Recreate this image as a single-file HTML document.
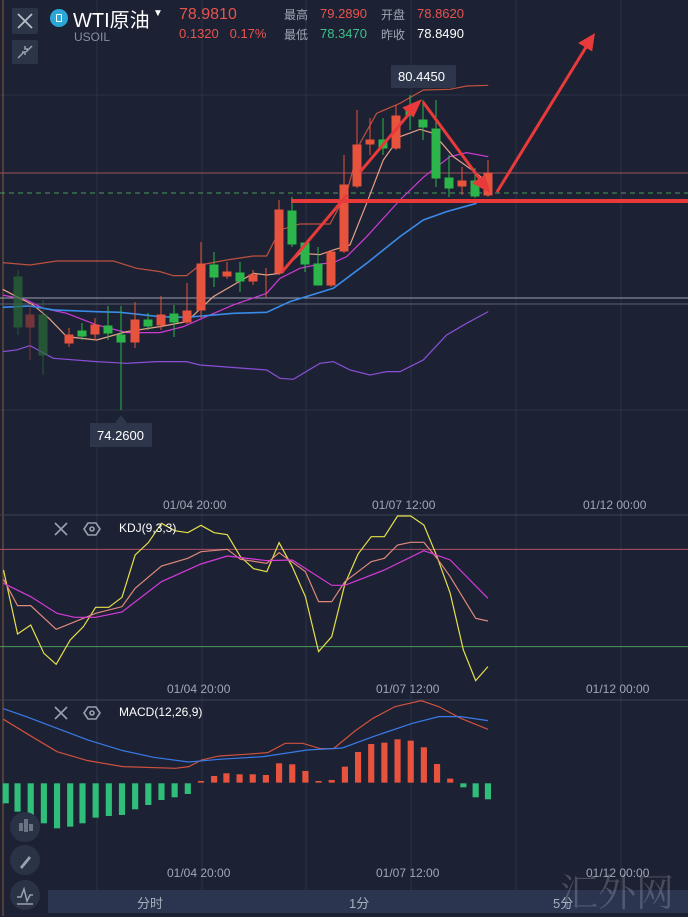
<!DOCTYPE html>
<html><head><meta charset="utf-8"><style>
body{margin:0;width:688px;height:916px;background:#1c2233;overflow:hidden;font-family:"Liberation Sans","Noto Sans CJK SC",sans-serif;position:relative}
.t{position:absolute;white-space:nowrap}
.btn{position:absolute;left:12px;width:26px;height:26px;background:#2c3447;border-radius:2px}
.rb{position:absolute;left:10px;width:30px;height:30px;border-radius:50%;background:#2a3245}
</style></head><body>
<svg width="688" height="916" style="position:absolute;left:0;top:0">
<g stroke="#2a3246" stroke-width="1">
<line x1="97" y1="0" x2="97" y2="890"/><line x1="202" y1="0" x2="202" y2="890"/><line x1="306" y1="0" x2="306" y2="890"/><line x1="411" y1="0" x2="411" y2="890"/><line x1="516" y1="0" x2="516" y2="890"/><line x1="621" y1="0" x2="621" y2="890"/>
<line x1="0" y1="95" x2="688" y2="95"/><line x1="0" y1="410" x2="688" y2="410"/>
</g>
<line x1="3" y1="0" x2="3" y2="916" stroke="#8a5a3a" stroke-width="1"/>
<line x1="0" y1="515" x2="688" y2="515" stroke="#3a4256"/>
<line x1="0" y1="700" x2="688" y2="700" stroke="#3a4256"/>
<line x1="0" y1="173" x2="688" y2="173" stroke="#a0505a" stroke-width="1"/>
<line x1="0" y1="193" x2="688" y2="193" stroke="#4a9a5a" stroke-dasharray="5,4"/>
<line x1="0" y1="298" x2="688" y2="298" stroke="#9aa0b0" stroke-width="1"/>
<line x1="0" y1="304" x2="688" y2="304" stroke="#5a6070" stroke-width="1"/>
<g transform="translate(0,60) scale(0.3333)" fill="none" stroke-width="1.2" vector-effect="non-scaling-stroke">
<polyline vector-effect="non-scaling-stroke" stroke="#c0503e" points="8,608 90,615 170,603 340,603 410,625 480,635 520,647 560,647 600,615 680,600 760,588 800,588 840,510 900,492 990,492 1040,400 1080,250 1130,160 1200,130 1270,90 1350,88 1400,78 1465,76"/>
<polyline vector-effect="non-scaling-stroke" stroke="#8a4fd8" points="8,875 50,870 90,857 160,895 290,905 380,910 470,905 560,905 600,915 800,930 840,955 880,958 960,910 1000,905 1050,930 1110,945 1160,935 1200,935 1270,900 1340,825 1400,790 1465,755"/>
<polyline vector-effect="non-scaling-stroke" stroke="#d03ad8" points="8,705 80,720 130,745 200,760 290,795 380,818 480,818 550,800 600,778 700,735 800,700 840,655 900,625 960,612 1000,608 1040,590 1100,530 1200,420 1270,352 1350,290 1400,278 1465,290"/>
<polyline vector-effect="non-scaling-stroke" stroke="#e8a088" points="8,688 60,715 100,735 150,778 200,830 290,840 380,815 480,800 560,785 640,710 760,640 800,645 840,640 900,580 960,584 1000,570 1050,555 1100,430 1150,300 1200,230 1260,208 1300,220 1360,290 1430,340 1465,370"/>
<polyline vector-effect="non-scaling-stroke" stroke="#3a8ae8" stroke-width="1.6" points="8,742 90,738 160,750 290,755 360,757 480,770 560,772 700,760 800,757 870,725 1000,685 1100,610 1200,530 1270,480 1340,455 1430,430"/>
</g>
<g stroke-width="1">
<!-- candles: x, top, bottom, color -->
<g fill="#2b6a3a" stroke="#2b6a3a" opacity="0.7"><line x1="18" y1="270" x2="18" y2="335"/><rect x="14" y="277" width="8" height="50"/><line x1="43" y1="300" x2="43" y2="375"/><rect x="39" y="315" width="8" height="40"/></g>
<g fill="#8a3a3a" stroke="#8a3a3a" opacity="0.8"><line x1="30" y1="305" x2="30" y2="360"/><rect x="26" y="315" width="8" height="12"/></g>
<g fill="#e8533e" stroke="#e8533e">
<line x1="69" y1="328" x2="69" y2="347"/><rect x="65" y="335" width="8" height="8"/>
<line x1="95" y1="318" x2="95" y2="340"/><rect x="91" y="325" width="8" height="9"/>
<line x1="135" y1="302" x2="135" y2="348"/><rect x="131" y="320" width="8" height="22"/>
<line x1="161" y1="296" x2="161" y2="330"/><rect x="157" y="315" width="8" height="10"/>
<line x1="187" y1="283" x2="187" y2="324"/><rect x="183" y="311" width="8" height="11"/>
<line x1="201" y1="242" x2="201" y2="318"/><rect x="197" y="264" width="8" height="46"/>
<line x1="227" y1="262" x2="227" y2="279"/><rect x="223" y="272" width="8" height="4"/>
<line x1="253" y1="270" x2="253" y2="285"/><rect x="249" y="275" width="8" height="6"/>
<line x1="266" y1="268" x2="266" y2="298"/>
<line x1="279" y1="200" x2="279" y2="275"/><rect x="275" y="210" width="8" height="63"/>
<line x1="331" y1="250" x2="331" y2="287"/><rect x="327" y="252" width="8" height="33"/>
<line x1="344" y1="155" x2="344" y2="253"/><rect x="340" y="185" width="8" height="66"/>
<line x1="357" y1="110" x2="357" y2="188"/><rect x="353" y="145" width="8" height="41"/>
<line x1="370" y1="118" x2="370" y2="155"/><rect x="366" y="140" width="8" height="4"/>
<line x1="396" y1="105" x2="396" y2="150"/><rect x="392" y="116" width="8" height="32"/>
<line x1="462" y1="167" x2="462" y2="195"/><rect x="458" y="181" width="8" height="5"/>
<line x1="488" y1="160" x2="488" y2="197"/><rect x="484" y="173" width="8" height="22"/>
</g>
<g fill="#2bb54a" stroke="#2bb54a">
<line x1="82" y1="323" x2="82" y2="340"/><rect x="78" y="331" width="8" height="5"/>
<line x1="108" y1="306" x2="108" y2="340"/><rect x="104" y="326" width="8" height="7"/>
<line x1="121" y1="306" x2="121" y2="410"/><rect x="117" y="335" width="8" height="7"/>
<line x1="148" y1="313" x2="148" y2="330"/><rect x="144" y="320" width="8" height="6"/>
<line x1="174" y1="305" x2="174" y2="337"/><rect x="170" y="314" width="8" height="8"/>
<line x1="214" y1="252" x2="214" y2="287"/><rect x="210" y="265" width="8" height="12"/>
<line x1="240" y1="262" x2="240" y2="292"/><rect x="236" y="273" width="8" height="8"/>
<line x1="292" y1="197" x2="292" y2="247"/><rect x="288" y="211" width="8" height="33"/>
<line x1="305" y1="243" x2="305" y2="272"/><rect x="301" y="243" width="8" height="21"/>
<line x1="318" y1="247" x2="318" y2="285"/><rect x="314" y="264" width="8" height="21"/>
<line x1="383" y1="118" x2="383" y2="155"/><rect x="379" y="140" width="8" height="8"/>
<line x1="410" y1="95" x2="410" y2="130"/><rect x="406" y="107" width="8" height="8"/>
<line x1="423" y1="100" x2="423" y2="140"/><rect x="419" y="120" width="8" height="7"/>
<line x1="436" y1="100" x2="436" y2="187"/><rect x="432" y="129" width="8" height="49"/>
<line x1="449" y1="155" x2="449" y2="197"/><rect x="445" y="178" width="8" height="10"/>
<line x1="475" y1="168" x2="475" y2="198"/><rect x="471" y="181" width="8" height="15"/>
</g>
</g>
<line x1="291" y1="201" x2="688" y2="201" stroke="#e83a3a" stroke-width="4"/>
<g stroke="#e83a3a" stroke-width="3" fill="#e83a3a">
<line x1="282" y1="272" x2="347" y2="195"/>
<line x1="360" y1="172" x2="414" y2="108"/><polygon points="419,102 405,108 413,115"/>
<line x1="423" y1="102" x2="482" y2="182"/><polygon points="488,190 475,183 484,177"/>
<line x1="497" y1="192" x2="588" y2="44"/><polygon points="593,36 581,43 591,49"/>
</g>
<rect x="391" y="65" width="65" height="23" fill="#2d364b"/>
<rect x="90" y="423" width="62" height="24" fill="#2d364b"/><polygon points="121,415 115,423 127,423" fill="#2d364b"/>
<g transform="translate(0,510) scale(0.4388,0.3333)" fill="none">
<line x1="0" y1="118" x2="1568" y2="118" stroke="#b0506a" vector-effect="non-scaling-stroke"/>
<line x1="0" y1="410" x2="1568" y2="410" stroke="#4a9a5a" vector-effect="non-scaling-stroke"/>
<polyline vector-effect="non-scaling-stroke" stroke="#e6e04a" stroke-width="1.2" points="8,180 40,372 70,345 100,430 128,463 160,390 190,350 218,292 248,292 278,262 308,135 338,98 368,40 398,62 428,68 458,46 488,68 518,74 548,140 578,176 608,185 636,98 666,170 696,260 726,425 756,380 786,222 816,132 846,80 876,80 906,18 936,18 966,45 996,140 1026,250 1056,420 1084,512 1112,470"/>
<polyline vector-effect="non-scaling-stroke" stroke="#e0887a" stroke-width="1.2" points="8,208 40,287 70,287 128,358 218,310 278,290 308,235 368,168 428,145 458,125 518,118 548,148 608,160 636,128 696,185 726,275 756,275 786,215 846,155 876,145 906,105 936,97 966,97 996,145 1026,200 1084,325 1112,333"/>
<polyline vector-effect="non-scaling-stroke" stroke="#d63ad8" stroke-width="1.2" points="8,220 70,260 130,310 170,322 218,322 278,306 368,215 458,162 518,138 608,152 666,150 756,226 786,226 876,180 966,122 1026,150 1112,265"/>
<polyline vector-effect="non-scaling-stroke" stroke="#d0503e" stroke-width="1.2" points="8,628 60,670 130,725 200,752 280,770 400,775 430,770 460,750 500,738 560,733 610,728 650,700 690,700 730,716 760,716 810,662 850,625 900,590 960,572 1000,590 1050,625 1112,658"/>
<polyline vector-effect="non-scaling-stroke" stroke="#3a7ae8" stroke-width="1.2" points="8,596 60,620 130,655 200,690 280,722 350,742 430,756 500,748 600,740 700,720 780,714 850,680 940,640 1000,620 1050,620 1112,632"/>
<g fill="#2fbf7a">
<rect x="6" y="820" width="14" height="60"/><rect x="33" y="820" width="14" height="85"/><rect x="63" y="820" width="14" height="95"/><rect x="93" y="820" width="14" height="120"/><rect x="123" y="820" width="14" height="135"/><rect x="153" y="820" width="14" height="130"/><rect x="181" y="820" width="14" height="120"/><rect x="211" y="820" width="14" height="103"/><rect x="241" y="820" width="14" height="98"/><rect x="271" y="820" width="14" height="95"/><rect x="301" y="820" width="14" height="78"/><rect x="331" y="820" width="14" height="65"/><rect x="361" y="820" width="14" height="50"/><rect x="391" y="820" width="14" height="42"/><rect x="421" y="820" width="14" height="32"/>
<rect x="1049" y="820" width="14" height="12"/><rect x="1077" y="820" width="14" height="42"/><rect x="1105" y="820" width="14" height="48"/>
</g>
<g fill="#e8533e">
<rect x="451" y="813" width="14" height="5"/><rect x="481" y="798" width="14" height="20"/><rect x="509" y="790" width="14" height="28"/><rect x="539" y="793" width="14" height="25"/><rect x="569" y="793" width="14" height="25"/><rect x="599" y="795" width="14" height="23"/><rect x="629" y="760" width="14" height="58"/><rect x="659" y="763" width="14" height="55"/><rect x="689" y="783" width="14" height="35"/><rect x="719" y="813" width="14" height="5"/><rect x="749" y="810" width="14" height="8"/><rect x="779" y="770" width="14" height="48"/><rect x="809" y="726" width="14" height="92"/><rect x="839" y="702" width="14" height="116"/><rect x="869" y="698" width="14" height="120"/><rect x="899" y="688" width="14" height="130"/><rect x="929" y="692" width="14" height="126"/><rect x="959" y="712" width="14" height="106"/><rect x="989" y="762" width="14" height="56"/><rect x="1019" y="806" width="14" height="12"/>
</g>
</g>
<g stroke="#9aa0ae" stroke-width="1.6" fill="none">
<path d="M55 523 L67 535 M67 523 L55 535"/><path d="M55 707 L67 719 M67 707 L55 719"/>
<polygon points="88,523 96,523 100,529 96,535 88,535 84,529"/><circle cx="92" cy="529" r="2"/>
<polygon points="88,707 96,707 100,713 96,719 88,719 84,713"/><circle cx="92" cy="713" r="2"/>
</g>
</svg>
<div class="btn" style="top:8px"></div>
<svg width="688" height="80" style="position:absolute;left:0;top:0">
<path d="M18 14 L32 28 M32 14 L18 28" stroke="#b8bdc8" stroke-width="1.8"/>
</svg>
<div class="btn" style="top:40px;height:24px"></div>
<svg width="60" height="80" style="position:absolute;left:0;top:0"><path d="M18 58 L24 52 M32 46 L26 52 M22 52 L25 52 L25 55 M28 49 L25 49 L25 46" stroke="#9aa0ae" stroke-width="1.5" fill="none"/></svg>
<div class="t" style="left:50px;top:9px;width:18px;height:18px;border-radius:50%;background:#2aa7d8"></div>
<div class="t" style="left:56px;top:14px;width:6px;height:8px;border:1.5px solid #fff;border-radius:1px;box-sizing:border-box"></div>
<div class="t" style="left:73px;top:4px;font-size:20px;color:#fff">WTI原油</div>
<div class="t" style="left:153px;top:8px;font-size:10px;color:#fff">▼</div>
<div class="t" style="left:74px;top:30px;font-size:12px;color:#8a90a0">USOIL</div>
<div class="t" style="left:179px;top:6px;font-size:16px;color:#e8534e">78.9810</div>
<div class="t" style="left:179px;top:26px;font-size:13px;color:#e8534e">0.1320&nbsp;&nbsp;&nbsp;0.17%</div>
<div class="t" style="left:284px;top:6px;font-size:12px;color:#a0a6b4">最高</div>
<div class="t" style="left:320px;top:6px;font-size:13px;color:#e8534e">79.2890</div>
<div class="t" style="left:381px;top:6px;font-size:12px;color:#a0a6b4">开盘</div>
<div class="t" style="left:417px;top:6px;font-size:13px;color:#e8534e">78.8620</div>
<div class="t" style="left:284px;top:26px;font-size:12px;color:#a0a6b4">最低</div>
<div class="t" style="left:320px;top:26px;font-size:13px;color:#3cc08a">78.3470</div>
<div class="t" style="left:381px;top:26px;font-size:12px;color:#a0a6b4">昨收</div>
<div class="t" style="left:417px;top:26px;font-size:13px;color:#fff">78.8490</div>
<div class="t" style="left:398px;top:69px;font-size:13px;color:#fff">80.4450</div>
<div class="t" style="left:97px;top:428px;font-size:13px;color:#fff">74.2600</div>
<div class="t" style="left:163px;top:498px;font-size:12px;color:#a0a6b4">01/04 20:00</div>
<div class="t" style="left:372px;top:498px;font-size:12px;color:#a0a6b4">01/07 12:00</div>
<div class="t" style="left:583px;top:498px;font-size:12px;color:#a0a6b4">01/12 00:00</div>
<div class="t" style="left:119px;top:521px;font-size:12px;color:#fff">KDJ(9,3,3)</div>
<div class="t" style="left:167px;top:682px;font-size:12px;color:#a0a6b4">01/04 20:00</div>
<div class="t" style="left:376px;top:682px;font-size:12px;color:#a0a6b4">01/07 12:00</div>
<div class="t" style="left:586px;top:682px;font-size:12px;color:#a0a6b4">01/12 00:00</div>
<div class="t" style="left:119px;top:705px;font-size:12px;color:#fff">MACD(12,26,9)</div>
<div class="t" style="left:167px;top:866px;font-size:12px;color:#a0a6b4">01/04 20:00</div>
<div class="t" style="left:376px;top:866px;font-size:12px;color:#a0a6b4">01/07 12:00</div>
<div class="t" style="left:586px;top:866px;font-size:12px;color:#a0a6b4">01/12 00:00</div>
<div class="t" style="left:48px;top:890px;width:640px;height:23px;background:#2b3550"></div>
<div class="t" style="left:137px;top:893px;font-size:13px;color:#a8aebc">分时</div>
<div class="t" style="left:349px;top:893px;font-size:13px;color:#a8aebc">1分</div>
<div class="t" style="left:553px;top:893px;font-size:13px;color:#a8aebc">5分</div>
<div class="t" style="left:560px;top:862px;font-size:38px;color:rgba(200,200,210,0.25);font-family:'Noto Serif CJK SC',serif">汇外网</div>
<div class="rb" style="top:812px"></div><div class="rb" style="top:845px"></div><div class="rb" style="top:880px"></div>
<svg width="50" height="916" style="position:absolute;left:0;top:0">
<g fill="#6a7284"><rect x="19" y="823" width="4" height="8"/><rect x="24" y="819" width="4" height="13"/><rect x="29" y="824" width="4" height="7"/></g>
<path d="M20 867 L29 856 L31 858 L22 869 Z" fill="#9aa0ae"/>
<path d="M17 897 L21 897 L24 889 L27 901 L30 895 L33 895 M17 904 L33 904" stroke="#9aa0ae" stroke-width="1.5" fill="none"/>
</svg>
</body></html>
